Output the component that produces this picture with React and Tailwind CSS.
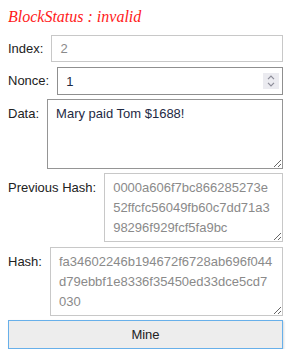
export default function App() {
  const prevHash = "0000a606f7bc866285273e52ffcfc56049fb60c7dd71a398296f929fcf5fa9bc";
  const hash = "fa34602246b194672f6728ab696f044d79ebbf1e8336f35450ed33dce5cd7030";

  return (
    <div className="pl-2 pr-[11px] pt-2 font-['Liberation_Sans',Arial,sans-serif] text-[13px] text-[#222]">
      <div className="font-['Liberation_Serif',serif] italic text-[16px] leading-[18px] text-[#ff1a1a] mb-[9px]">
        BlockStatus : invalid
      </div>

      <div className="flex items-center gap-2">
        <label className="leading-[20px]">Index:</label>
        <input
          disabled
          value="2"
          readOnly
          className="flex-1 min-w-0 h-[27px] px-2 border border-[#c8c8c8] bg-white text-[#8a8a8a] outline-none"
        />
      </div>

      <div className="flex items-center gap-2 mt-[5px]">
        <label className="leading-[20px]">Nonce:</label>
        <div className="flex-1 min-w-0 h-[28px] flex items-center border border-[#8f8f8f] bg-white">
          <input
            value="1"
            readOnly
            className="flex-1 min-w-0 h-full px-2 bg-transparent text-[#1e2a44] outline-none"
          />
          <div className="w-4 h-4 mr-[3px] bg-[#ebebf0] flex flex-col items-center justify-center gap-[2px]">
            <svg width="8" height="5" viewBox="0 0 8 5" fill="none" stroke="#8c8c98" strokeWidth="1.2">
              <path d="M1 4.2 L4 1.2 L7 4.2" />
            </svg>
            <svg width="8" height="5" viewBox="0 0 8 5" fill="none" stroke="#8c8c98" strokeWidth="1.2">
              <path d="M1 0.8 L4 3.8 L7 0.8" />
            </svg>
          </div>
        </div>
      </div>

      <div className="flex items-start gap-2 mt-1">
        <label className="pt-[5px] leading-[20px]">Data:</label>
        <textarea
          value="Mary paid Tom $1688!"
          readOnly
          rows={3}
          className="flex-1 min-w-0 h-[70px] px-2 py-1 leading-[20px] border border-[#959595] bg-white text-[#1e2a44] outline-none resize"
        />
      </div>

      <div className="flex items-start gap-2 mt-1">
        <label className="pt-[5px] leading-[20px]">Previous Hash:</label>
        <textarea
          disabled
          value={prevHash}
          readOnly
          rows={3}
          className="flex-1 min-w-0 h-[69px] px-2 pt-1 pb-[3px] leading-[20px] border border-[#c8c8c8] bg-white text-[#8a8a8a] outline-none resize"
        />
      </div>

      <div className="flex items-start gap-2 mt-[5px]">
        <label className="pt-[5px] leading-[20px]">Hash:</label>
        <textarea
          disabled
          value={hash}
          readOnly
          rows={3}
          className="flex-1 min-w-0 h-[69px] px-2 pt-1 pb-[3px] leading-[20px] border border-[#c8c8c8] bg-white text-[#8a8a8a] outline-none resize"
        />
      </div>

      <button className="mt-1 w-full h-[29px] border border-[#68b0ea] bg-[#ededed] text-[#222] shadow-[1px_1px_2px_rgba(0,0,0,0.15)]">
        Mine
      </button>
    </div>
  );
}
